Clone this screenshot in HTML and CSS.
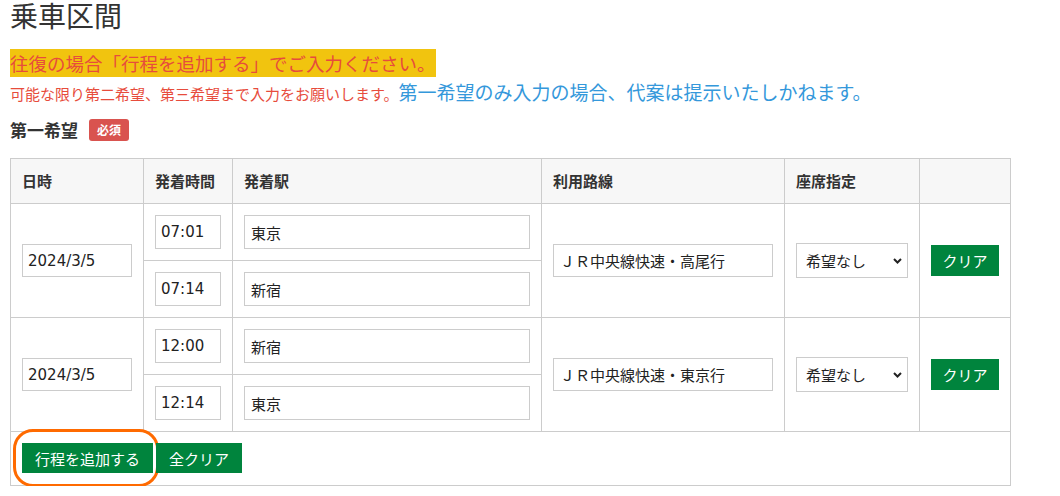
FILE: index.html
```html
<!DOCTYPE html>
<html lang="ja">
<head>
  <meta charset="UTF-8">
  <title>乗車区間</title>
  <link rel="stylesheet" href="styles.css">
</head>
<body>
  <h1 class="page-title">乗車区間</h1>

  <p class="notice"><span class="notice-mark">往復の場合「行程を追加する」でご入力ください。</span></p>
  <p class="note"><span class="note-red">可能な限り第二希望、第三希望まで入力をお願いします。</span><span class="note-blue">第一希望のみ入力の場合、代案は提示いたしかねます。</span></p>

  <h2 class="choice-title">第一希望<span class="badge">必須</span></h2>

  <table class="route-table">
    <colgroup>
      <col class="c-date">
      <col class="c-time">
      <col class="c-station">
      <col class="c-line">
      <col class="c-seat">
      <col class="c-clear">
    </colgroup>
    <thead>
      <tr>
        <th>日時</th>
        <th>発着時間</th>
        <th>発着駅</th>
        <th>利用路線</th>
        <th>座席指定</th>
        <th></th>
      </tr>
    </thead>
    <tbody>
      <!-- 行程1 -->
      <tr>
        <td rowspan="2"><input class="field field-date" type="text" value="2024/3/5"></td>
        <td><input class="field" type="text" value="07:01"></td>
        <td><input class="field field-jp" type="text" value="東京"></td>
        <td rowspan="2"><input class="field field-date field-jp" type="text" value="ＪＲ中央線快速・高尾行"></td>
        <td rowspan="2">
          <span class="select-wrap">
            <select class="field-select"><option>希望なし</option></select>
            <svg class="chevron" width="9" height="6" viewBox="0 0 9 6"><path d="M1 1 L4.5 4.5 L8 1" fill="none" stroke="#222" stroke-width="2"/></svg>
          </span>
        </td>
        <td rowspan="2"><button class="btn btn-clear" type="button">クリア</button></td>
      </tr>
      <tr>
        <td><input class="field" type="text" value="07:14"></td>
        <td><input class="field field-jp" type="text" value="新宿"></td>
      </tr>
      <!-- 行程2 -->
      <tr>
        <td rowspan="2"><input class="field field-date" type="text" value="2024/3/5"></td>
        <td><input class="field" type="text" value="12:00"></td>
        <td><input class="field field-jp" type="text" value="新宿"></td>
        <td rowspan="2"><input class="field field-date field-jp" type="text" value="ＪＲ中央線快速・東京行"></td>
        <td rowspan="2">
          <span class="select-wrap">
            <select class="field-select"><option>希望なし</option></select>
            <svg class="chevron" width="9" height="6" viewBox="0 0 9 6"><path d="M1 1 L4.5 4.5 L8 1" fill="none" stroke="#222" stroke-width="2"/></svg>
          </span>
        </td>
        <td rowspan="2"><button class="btn btn-clear" type="button">クリア</button></td>
      </tr>
      <tr>
        <td><input class="field" type="text" value="12:14"></td>
        <td><input class="field field-jp" type="text" value="東京"></td>
      </tr>
      <tr>
        <td colspan="6" class="actions-cell">
          <div class="actions">
            <button class="btn btn-add" type="button">行程を追加する<span class="ring"></span></button>
            <button class="btn" type="button">全クリア</button>
          </div>
        </td>
      </tr>
    </tbody>
  </table>
</body>
</html>
```

FILE: styles.css
```css
html, body {
  margin: 0;
  padding: 0;
  background: #fff;
}
body {
  padding: 0 10px;
  font-family: "Noto Sans CJK JP", "Noto Sans", sans-serif;
  color: #333;
}
.page-title {
  margin: 0;
  font-size: 28px;
  font-weight: normal;
  line-height: 30px;
}
.notice {
  margin: 19px 0 0;
  font-size: 18.5px;
  line-height: 28px;
}
.notice-mark {
  background-color: #f1c40f;
  color: #e74c3c;
  padding: 1px 0;
}
.note {
  margin: 1px 0 0;
  line-height: 28px;
  font-size: 15px;
}
.note-red {
  color: #e74c3c;
}
.note-blue {
  color: #3498db;
  font-size: 19px;
}
.choice-title {
  margin: 9px 0 0;
  font-size: 17px;
  font-weight: bold;
  line-height: 26px;
  display: flex;
  align-items: center;
  gap: 11px;
}
.badge {
  background-color: #d9534f;
  color: #fff;
  font-size: 12px;
  line-height: 22px;
  padding: 0 8px;
  border-radius: 3px;
}

/* 行程テーブル */
.route-table {
  margin-top: 15px;
  width: 1001px;
  border-collapse: collapse;
  table-layout: fixed;
}
.c-date { width: 133px; }
.c-time { width: 89px; }
.c-station { width: 309px; }
.c-line { width: 243px; }
.c-seat { width: 135px; }
.c-clear { width: 91px; }
.route-table th,
.route-table td {
  border: 1px solid #ccc;
  padding: 11px;
  vertical-align: middle;
}
.route-table th {
  background-color: #f7f7f7;
  text-align: left;
  font-size: 15px;
  line-height: 22px;
}
.field {
  display: block;
  width: 100%;
  box-sizing: border-box;
  height: 34px;
  margin: 0;
  padding: 0 5px;
  border: 1px solid #ccc;
  border-radius: 0;
  font-family: "DejaVu Sans", "Noto Sans CJK JP", sans-serif;
  font-size: 15px;
  color: #222;
  background: #fff;
}
.field-jp {
  font-family: "Noto Sans CJK JP", sans-serif;
  padding-left: 6px;
}
.field-date {
  height: 33px;
}
.select-wrap {
  display: block;
  position: relative;
}
.field-select {
  display: block;
  width: 100%;
  height: 35px;
  box-sizing: border-box;
  margin: 0;
  padding: 0 9px;
  border: 1px solid #ccc;
  border-radius: 0;
  appearance: none;
  background: #fff;
  font-family: inherit;
  font-size: 15px;
  color: #222;
}
.chevron {
  position: absolute;
  right: 6px;
  top: 15px;
  pointer-events: none;
}
.btn {
  position: relative;
  border: 0;
  border-radius: 0;
  margin: 0;
  background-color: #00843d;
  color: #fff;
  font-family: inherit;
  font-size: 15px;
  height: 30px;
  padding: 0 13px;
  cursor: pointer;
}
.btn-clear {
  display: block;
  width: 100%;
  height: 31px;
  padding: 0;
}
.route-table .actions-cell {
  padding: 11px 11px 12px;
}
.actions {
  display: flex;
  gap: 3px;
}
/* オレンジの囲み */
.ring {
  position: absolute;
  left: -9px;
  right: -6px;
  top: -14px;
  bottom: -14px;
  border: 3px solid #ff6a00;
  border-radius: 20px;
  pointer-events: none;
}
```
